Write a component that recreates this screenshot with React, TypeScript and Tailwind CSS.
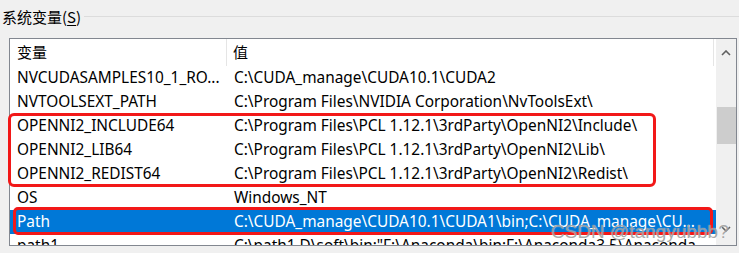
import React from "react";

type Row = { name: string; value: string; selected?: boolean };

const rows: Row[] = [
  { name: "NVCUDASAMPLES10_1_RO...", value: "C:\\CUDA_manage\\CUDA10.1\\CUDA2" },
  { name: "NVTOOLSEXT_PATH", value: "C:\\Program Files\\NVIDIA Corporation\\NvToolsExt\\" },
  { name: "OPENNI2_INCLUDE64", value: "C:\\Program Files\\PCL 1.12.1\\3rdParty\\OpenNI2\\Include\\" },
  { name: "OPENNI2_LIB64", value: "C:\\Program Files\\PCL 1.12.1\\3rdParty\\OpenNI2\\Lib\\" },
  { name: "OPENNI2_REDIST64", value: "C:\\Program Files\\PCL 1.12.1\\3rdParty\\OpenNI2\\Redist\\" },
  { name: "OS", value: "Windows_NT" },
  {
    name: "Path",
    value: "C:\\CUDA_manage\\CUDA10.1\\CUDA1\\bin;C:\\CUDA_manage\\CU...",
    selected: true,
  },
  { name: "path1", value: "C:\\path1 D\\soft\\bin;\"F:\\Anaconda\\bin;F:\\Anaconda3.5\\Anaconda" },
];

const App = () => {
  return (
    <div
      className="relative w-[739px] h-[253px] overflow-hidden bg-[#f0f0f0] text-black"
      style={{ fontFamily: '"Noto Sans", "Noto Sans CJK SC", sans-serif' }}
    >
      {/* group title */}
      <div className="flex items-center h-[32px] pl-[2px]">
        <span className="text-[15px] leading-none whitespace-nowrap" style={{ fontFamily: '"Noto Sans CJK SC", sans-serif' }}>
          系统变量(<span className="underline underline-offset-2">S</span>)
        </span>
        <div className="flex-1 ml-[3px] h-px bg-[#dcdcdc]" />
      </div>

      {/* list view */}
      <div className="ml-[9px] mt-[6px] w-[728px] h-[208px] border border-[#828790] bg-white flex overflow-hidden">
        <div className="w-[706px] flex flex-col">
          <div className="flex h-[27px] shrink-0 text-[15px]" style={{ fontFamily: '"Noto Sans CJK SC", sans-serif' }}>
            <div className="w-[217px] pl-[7px] flex items-center border-r border-[#e5e5e5]">变量</div>
            <div className="w-[487px] pl-[6px] flex items-center border-r border-[#e5e5e5]">值</div>
          </div>
          {rows.map((r) => (
            <div
              key={r.name}
              className={
                "flex h-[24px] shrink-0 items-center text-[15.4px] whitespace-nowrap " +
                (r.selected ? "bg-[#0078d7] text-white" : "")
              }
            >
              <div className="w-[217px] pl-[7px] overflow-hidden">{r.name}</div>
              <div className="flex-1 pl-[7px] overflow-hidden">{r.value}</div>
            </div>
          ))}
        </div>

        {/* scrollbar */}
        <div className="w-[20px] ml-auto bg-[#f0f0f0] flex flex-col items-center">
          <div className="h-[26px] w-full flex items-center justify-center pt-[2px]">
            <svg width="10" height="6" viewBox="0 0 10 6">
              <path d="M1 5 L5 1 L9 5" fill="none" stroke="#606060" strokeWidth="1.6" />
            </svg>
          </div>
          <div className="h-[42px]" />
          <div className="w-[19px] h-[37px] bg-[#cdcdcd]" />
          <div className="flex-1" />
          <div className="h-[26px] w-full flex items-center justify-center pb-[6px]">
            <svg width="10" height="6" viewBox="0 0 10 6">
              <path d="M1 1 L5 5 L9 1" fill="none" stroke="#606060" strokeWidth="1.6" />
            </svg>
          </div>
        </div>
      </div>

      {/* red annotation boxes */}
      <div className="absolute left-[8px] top-[113px] w-[648px] h-[74px] border-[3px] border-[#f21818] rounded-[6px]" />
      <div className="absolute left-[13px] top-[207px] w-[700px] h-[28px] border-[3px] border-[#f21818] rounded-[5px]" />

      {/* watermark */}
      <div
        className="absolute left-[551px] top-[222px] text-[19px] leading-none whitespace-nowrap text-[rgba(130,130,130,0.7)]"
        style={{ fontFamily: '"Liberation Sans", sans-serif', textShadow: "0 0 1px rgba(255,255,255,0.8)" }}
      >
        CSDN @tangyubbb?
      </div>
    </div>
  );
};

export default App;
